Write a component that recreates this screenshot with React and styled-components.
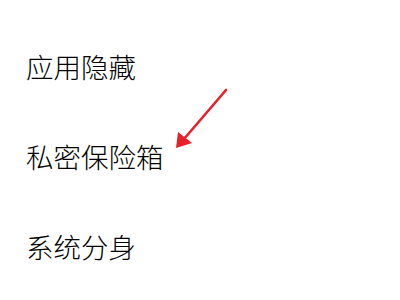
import React from "react";
import styled, { createGlobalStyle } from "styled-components";

const GlobalStyle = createGlobalStyle`
  html, body {
    margin: 0;
    padding: 0;
    background: #fff;
  }
  body {
    font-family: "Noto Sans CJK SC", "Noto Sans", sans-serif;
  }
`;

const Screen = styled.div`
  position: relative;
  width: 400px;
  height: 300px;
  background: #fff;
  overflow: hidden;
`;

const List = styled.ul`
  list-style: none;
  margin: 0;
  padding: 21px 0 0 0;
  display: flex;
  flex-direction: column;
`;

const Row = styled.li`
  height: 90px;
  display: flex;
  align-items: center;
  padding-left: 26px;
  font-size: 27.5px;
  font-weight: 300;
  color: #000;
`;

const Arrow = styled.svg`
  position: absolute;
  left: 0;
  top: 0;
  pointer-events: none;
`;

const items = ["应用隐藏", "私密保险箱", "系统分身"];

export default function App() {
  return (
    <Screen>
      <GlobalStyle />
      <List>
        {items.map((t) => (
          <Row key={t}>{t}</Row>
        ))}
      </List>
      <Arrow width="400" height="300" viewBox="0 0 400 300">
        <line
          x1="226"
          y1="90"
          x2="184"
          y2="139"
          stroke="#e8202a"
          strokeWidth="2.6"
          strokeLinecap="round"
        />
        <polygon points="176,148 178,132 192,143" fill="#e8202a" />
      </Arrow>
    </Screen>
  );
}
